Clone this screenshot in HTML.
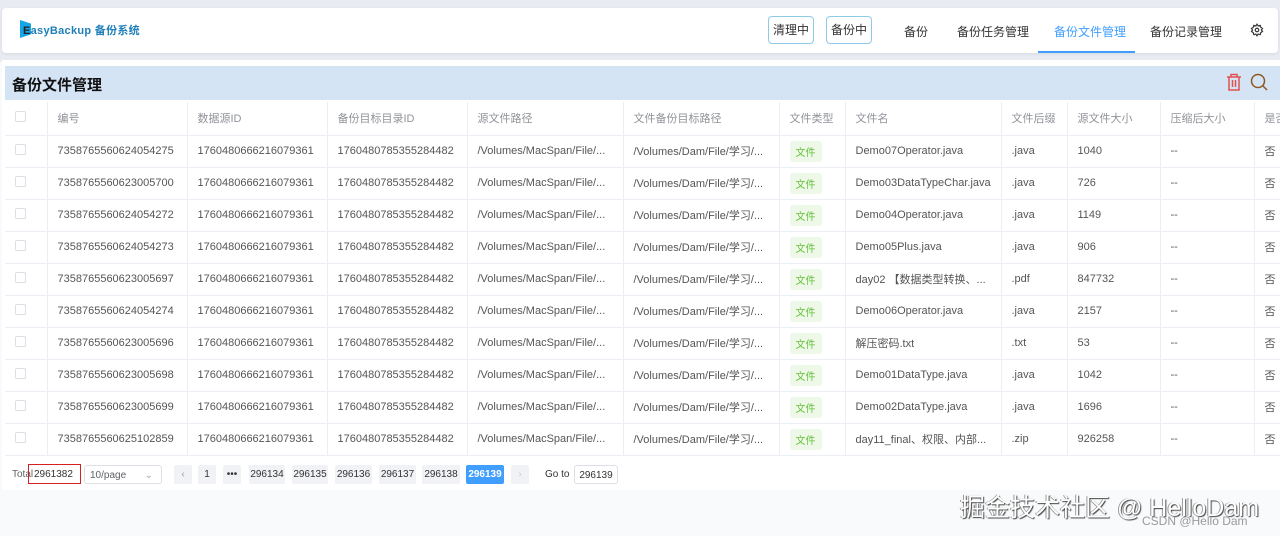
<!DOCTYPE html>
<html><head><meta charset="utf-8"><style>
*{box-sizing:border-box;margin:0;padding:0}
body{width:1280px;height:536px;overflow:hidden;background:#f8fafc;font-family:"Liberation Sans","Noto Sans CJK SC",sans-serif;position:relative;color:#606266}
.topbg{position:absolute;left:0;top:0;width:1280px;height:62px;background:#e8ecf2}
.nav{position:absolute;left:2px;top:8px;width:1276px;height:45px;background:#fff;border-radius:4px;box-shadow:0 1px 3px rgba(0,0,0,.08)}
.logo{position:absolute;left:18px;top:14px;font-size:11px;font-weight:bold;color:#1f7fb8;letter-spacing:.3px}
.logo i{position:absolute;left:0;top:-2px;width:11px;height:18px;background:#16a6e8;clip-path:polygon(0 0,100% 20%,100% 80%,0 100%)}
.logo span{position:relative;color:#222;padding-left:3px}
.btn{position:absolute;top:8px;height:28px;border:1px solid #8ccbe8;border-radius:4px;font-size:12px;color:#333;line-height:26px;text-align:center;width:46px}
.nl{position:absolute;top:15px;font-size:12px;color:#333}
.card{position:absolute;left:2px;top:60px;width:1278px;height:430px;background:#fff}
.tb{position:absolute;left:5px;top:66px;width:1275px;height:34px;background:#d5e4f5}
.tb b{position:absolute;left:7px;top:8px;font-size:15px;color:#111}
table{position:absolute;left:5px;top:102px;border-collapse:collapse;font-size:11px;table-layout:fixed;width:1290px}
td,th{height:32px;border-right:1px solid #ebeef5;border-bottom:1px solid #ebeef5;padding-left:10px;white-space:nowrap;overflow:hidden;text-align:left;font-weight:normal;color:#555}
th{color:#909399;height:33px}
.cb{display:inline-block;width:11px;height:11px;border:1px solid #dcdfe6;border-radius:2px}
.tag{display:inline-block;background:#eef8e8;color:#67c23a;font-size:10px;padding:3px 6px;border-radius:3px}
.pg{position:absolute;top:465px;font-size:10px;color:#333;height:19px;line-height:19px}
.pb{background:#f0f2f5;width:26px;text-align:center;border-radius:2px}
</style></head><body>
<div class="topbg"></div>
<div class="nav">
<div class="logo"><i></i><span>E</span>asyBackup 备份系统</div>
<div class="btn" style="left:766px">清理中</div>
<div class="btn" style="left:824px">备份中</div>
<div class="nl" style="left:902px">备份</div>
<div class="nl" style="left:955px">备份任务管理</div>
<div class="nl" style="left:1052px;color:#409eff">备份文件管理</div>
<div style="position:absolute;left:1036px;top:43px;width:97px;height:2px;background:#409eff"></div>
<div class="nl" style="left:1148px">备份记录管理</div>
<svg style="position:absolute;left:1248px;top:15px" width="14" height="14" viewBox="0 0 24 24" fill="none" stroke="#333" stroke-width="2"><circle cx="12" cy="12" r="3"/><path d="M12 2l2 3 3.5-1 1 3.5 3 2-2 2.5 2 2.5-3 2-1 3.5-3.5-1-2 3-2-3-3.5 1-1-3.5-3-2 2-2.5-2-2.5 3-2 1-3.5 3.5 1z"/></svg>
</div>
<div class="card"></div>
<div class="tb"><b>备份文件管理</b>
<svg style="position:absolute;left:1221px;top:7px" width="16" height="18" viewBox="0 0 16 18" fill="none" stroke="#e05050" stroke-width="1.5"><path d="M1 4h14M5 4V1.5h6V4M3 4v13h10V4M6.5 7v7M9.5 7v7"/></svg>
<svg style="position:absolute;left:1245px;top:7px" width="18" height="18" viewBox="0 0 18 18" fill="none" stroke="#8a5a20" stroke-width="1.5"><circle cx="8" cy="8" r="6.5"/><path d="M13 13l4 4"/></svg>
</div>
<table>
<colgroup><col style="width:42px"><col style="width:140px"><col style="width:140px"><col style="width:140px"><col style="width:156px"><col style="width:156px"><col style="width:66px"><col style="width:156px"><col style="width:66px"><col style="width:93px"><col style="width:94px"><col style="width:41px"></colgroup>
<tr><th><span class="cb"></span></th><th>编号</th><th>数据源ID</th><th>备份目标目录ID</th><th>源文件路径</th><th>文件备份目标路径</th><th>文件类型</th><th>文件名</th><th>文件后缀</th><th>源文件大小</th><th>压缩后大小</th><th>是否</th></tr>
<tr><td><span class="cb"></span></td><td>7358765560624054275</td><td>1760480666216079361</td><td>1760480785355284482</td><td>/Volumes/MacSpan/File/...</td><td>/Volumes/Dam/File/学习/...</td><td><span class="tag">文件</span></td><td>Demo07Operator.java</td><td>.java</td><td>1040</td><td>--</td><td>否</td></tr>
<tr><td><span class="cb"></span></td><td>7358765560623005700</td><td>1760480666216079361</td><td>1760480785355284482</td><td>/Volumes/MacSpan/File/...</td><td>/Volumes/Dam/File/学习/...</td><td><span class="tag">文件</span></td><td>Demo03DataTypeChar.java</td><td>.java</td><td>726</td><td>--</td><td>否</td></tr>
<tr><td><span class="cb"></span></td><td>7358765560624054272</td><td>1760480666216079361</td><td>1760480785355284482</td><td>/Volumes/MacSpan/File/...</td><td>/Volumes/Dam/File/学习/...</td><td><span class="tag">文件</span></td><td>Demo04Operator.java</td><td>.java</td><td>1149</td><td>--</td><td>否</td></tr>
<tr><td><span class="cb"></span></td><td>7358765560624054273</td><td>1760480666216079361</td><td>1760480785355284482</td><td>/Volumes/MacSpan/File/...</td><td>/Volumes/Dam/File/学习/...</td><td><span class="tag">文件</span></td><td>Demo05Plus.java</td><td>.java</td><td>906</td><td>--</td><td>否</td></tr>
<tr><td><span class="cb"></span></td><td>7358765560623005697</td><td>1760480666216079361</td><td>1760480785355284482</td><td>/Volumes/MacSpan/File/...</td><td>/Volumes/Dam/File/学习/...</td><td><span class="tag">文件</span></td><td>day02 【数据类型转换、...</td><td>.pdf</td><td>847732</td><td>--</td><td>否</td></tr>
<tr><td><span class="cb"></span></td><td>7358765560624054274</td><td>1760480666216079361</td><td>1760480785355284482</td><td>/Volumes/MacSpan/File/...</td><td>/Volumes/Dam/File/学习/...</td><td><span class="tag">文件</span></td><td>Demo06Operator.java</td><td>.java</td><td>2157</td><td>--</td><td>否</td></tr>
<tr><td><span class="cb"></span></td><td>7358765560623005696</td><td>1760480666216079361</td><td>1760480785355284482</td><td>/Volumes/MacSpan/File/...</td><td>/Volumes/Dam/File/学习/...</td><td><span class="tag">文件</span></td><td>解压密码.txt</td><td>.txt</td><td>53</td><td>--</td><td>否</td></tr>
<tr><td><span class="cb"></span></td><td>7358765560623005698</td><td>1760480666216079361</td><td>1760480785355284482</td><td>/Volumes/MacSpan/File/...</td><td>/Volumes/Dam/File/学习/...</td><td><span class="tag">文件</span></td><td>Demo01DataType.java</td><td>.java</td><td>1042</td><td>--</td><td>否</td></tr>
<tr><td><span class="cb"></span></td><td>7358765560623005699</td><td>1760480666216079361</td><td>1760480785355284482</td><td>/Volumes/MacSpan/File/...</td><td>/Volumes/Dam/File/学习/...</td><td><span class="tag">文件</span></td><td>Demo02DataType.java</td><td>.java</td><td>1696</td><td>--</td><td>否</td></tr>
<tr><td><span class="cb"></span></td><td>7358765560625102859</td><td>1760480666216079361</td><td>1760480785355284482</td><td>/Volumes/MacSpan/File/...</td><td>/Volumes/Dam/File/学习/...</td><td><span class="tag">文件</span></td><td>day11_final、权限、内部...</td><td>.zip</td><td>926258</td><td>--</td><td>否</td></tr>
</table>
<div class="pg" style="left:12px;color:#606266">Total</div>
<div class="pg" style="left:28px;width:53px;border:1.5px solid #d42020;padding-left:5px;height:20px;top:464px">2961382</div>
<div class="pg" style="left:84px;width:78px;border:1px solid #dcdfe6;border-radius:3px;padding-left:5px;color:#606266">10/page<span style="position:absolute;right:8px;color:#aaa">⌄</span></div>
<div class="pg pb" style="left:174px;width:18px;color:#999">‹</div>
<div class="pg pb" style="left:198px;width:18px">1</div>
<div class="pg pb" style="left:223px;width:18px">•••</div>
<div class="pg pb" style="left:249px;width:36px">296134</div>
<div class="pg pb" style="left:292px;width:36px">296135</div>
<div class="pg pb" style="left:335px;width:37px">296136</div>
<div class="pg pb" style="left:379px;width:37px">296137</div>
<div class="pg pb" style="left:422px;width:38px">296138</div>
<div class="pg pb" style="left:466px;width:38px;background:#409eff;color:#fff;font-weight:bold">296139</div>
<div class="pg pb" style="left:511px;width:18px;color:#ccc">›</div>
<div class="pg" style="left:545px">Go to</div>
<div class="pg" style="left:574px;width:44px;border:1px solid #dcdfe6;border-radius:3px;text-align:center">296139</div>
<div style="position:absolute;left:960px;top:488px;font-size:25px;color:#fff;text-shadow:1px 1px 1px #444,-1px 0 0 #999;">掘金技术社区 @ HelloDam</div>
<div style="position:absolute;left:1142px;top:514px;font-size:12px;color:#9a9a9a">CSDN @Hello Dam</div>
</body></html>
